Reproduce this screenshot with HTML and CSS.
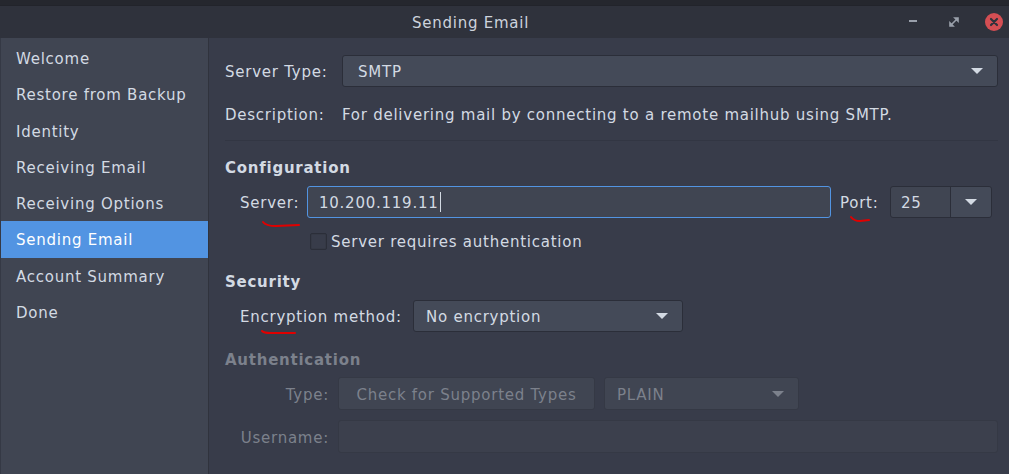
FILE: index.html
```html
<!DOCTYPE html>
<html>
<head>
<meta charset="utf-8">
<link rel="stylesheet" href="styles.css">
</head>
<body>
<div class="window">
  <div class="topstrip"></div>
  <div class="titlebar">
    <div class="title">Sending Email</div>
    <div class="controls">
      <span class="btn-min"></span>
      <svg class="btn-max" width="10" height="10" viewBox="0 0 10 10"><path d="M1 6 L1 9 L4 9 Z M6 1 L9 1 L9 4 Z M3 7 L7 3" fill="#9aa0ab" stroke="#9aa0ab" stroke-width="1.6"/></svg>
      <span class="btn-close"><svg width="18" height="18" viewBox="0 0 18 18"><circle cx="9" cy="9" r="9" fill="#d44e53"/><path d="M6 6 L12 12 M12 6 L6 12" stroke="#2f323c" stroke-width="2.2" stroke-linecap="round"/></svg></span>
    </div>
  </div>
  <div class="body">
    <ul class="sidebar">
      <li>Welcome</li>
      <li>Restore from Backup</li>
      <li>Identity</li>
      <li>Receiving Email</li>
      <li>Receiving Options</li>
      <li class="active">Sending Email</li>
      <li>Account Summary</li>
      <li>Done</li>
    </ul>
    <div class="main">
      <div class="row r-type">
        <span class="lbl">Server Type:</span>
        <div class="combo wide"><span>SMTP</span><span class="arrow"></span></div>
      </div>
      <div class="row r-desc">
        <span class="lbl">Description:</span>
        <span class="desc">For delivering mail by connecting to a remote mailhub using SMTP.</span>
      </div>
      <div class="sep"></div>
      <div class="heading">Configuration</div>
      <div class="row r-server">
        <span class="lbl ind">Server:</span>
        <div class="entry focus">10.200.119.11<span class="caret"></span></div>
        <span class="lbl port">Port:</span>
        <div class="spin"><span class="val">25</span><span class="spinbtn"><span class="arrow"></span></span></div>
      </div>
      <div class="row r-check">
        <span class="check"></span><span class="lbl">Server requires authentication</span>
      </div>
      <div class="heading h-sec">Security</div>
      <div class="row r-enc">
        <span class="lbl ind">Encryption method:</span>
        <div class="combo enc"><span>No encryption</span><span class="arrow"></span></div>
      </div>
      <div class="heading h-auth disabled">Authentication</div>
      <div class="row r-authtype disabled">
        <span class="lbl rcol">Type:</span>
        <div class="button">Check for Supported Types</div>
        <div class="combo plain"><span>PLAIN</span><span class="arrow"></span></div>
      </div>
      <div class="row r-user disabled">
        <span class="lbl rcol">Username:</span>
        <div class="entry dis"></div>
      </div>
    </div>
  </div>
  <svg class="marks" width="1009" height="474" viewBox="0 0 1009 474">
    <path d="M263 222 Q266 226 276 226 L299 225" fill="none" stroke="#e00000" stroke-width="2" stroke-linecap="round"/>
    <path d="M851 217 Q854 221 860 221 L869 220" fill="none" stroke="#e00000" stroke-width="2" stroke-linecap="round"/>
    <path d="M262 331 Q264 333 270 333 L295 333" fill="none" stroke="#e00000" stroke-width="2" stroke-linecap="round"/>
  </svg>
</div>
</body>
</html>
```

FILE: styles.css
```css
* { box-sizing: border-box; }
html, body { margin: 0; padding: 0; }
body {
  width: 1009px;
  height: 474px;
  overflow: hidden;
  background: #383c4a;
  font-family: "DejaVu Sans", sans-serif;
  font-size: 15px;
  letter-spacing: 0.75px;
  color: #d3dae3;
}
.window { position: relative; width: 1009px; height: 474px; display: flex; flex-direction: column; }
.topstrip { height: 6px; background: #25272e; border-bottom: 1px solid #22242b; }
.titlebar {
  height: 32px;
  background: #2f323c;
  display: flex;
  align-items: center;
  position: relative;
}
.title { flex: 1; text-align: center; padding-left: 32px; padding-top: 2px; color: #cdd3dc; font-size: 15px; }
.controls { display: flex; align-items: center; gap: 0; padding-right: 6px; }
.btn-min { width: 8px; height: 2px; background: #9aa0ab; margin-right: 32px; margin-top: -2px; }
.btn-max { margin-right: 26px; }
.btn-close { width: 18px; height: 18px; display: block; }
.btn-close svg { display: block; }

.body { flex: 1; display: flex; min-height: 0; }
.sidebar {
  list-style: none;
  margin: 0;
  padding: 2px 0 0 0;
  width: 209px;
  background: #404552;
  border-left: 1px solid #353945;
  border-right: 1px solid #30333d;
}
.sidebar li {
  height: 36.3px;
  line-height: 38.3px;
  padding-left: 15px;
  white-space: nowrap;
}
.sidebar li.active { background: #5294e2; color: #fff; }

.main { flex: 1; padding: 17px 11px 0 16px; }
.row { display: flex; align-items: center; }
.lbl { white-space: nowrap; padding-top: 2px; }
.ind { margin-left: 15px; }

.combo, .entry, .spin, .button {
  height: 32px;
  border-radius: 3px;
  display: flex;
  align-items: center;
  white-space: nowrap;
  padding-top: 2px;
}
.combo {
  background: #444a58;
  border: 1px solid #2b2e39;
  justify-content: space-between;
  padding-right: 14px;
  padding-left: 12px;
}
.arrow {
  width: 0; height: 0;
  border-left: 6px solid transparent;
  border-right: 6px solid transparent;
  border-top: 6px solid #d3dae3;
  margin-top: -2px;
}
.r-type .lbl { width: 117px; }
.combo.wide { flex: 1; padding-left: 15px; }

.r-desc { margin-top: 17px; height: 20px; }
.r-desc .lbl { width: 117px; }
.desc { white-space: nowrap; padding-top: 2px; }
.sep { height: 1px; background: #323643; margin: 16px 0 0 0; }

.heading { font-weight: bold; margin-top: 16px; height: 20px; line-height: 22px; }

.r-server { margin-top: 9px; }
.r-server .lbl.ind { width: 67px; }
.entry {
  background: #404552;
  border: 1px solid #2b2e39;
  padding-left: 11px;
}
.entry.focus { width: 524px; border-color: #5294e2; }
.caret { display: inline-block; width: 1px; height: 20px; background: #d3dae3; margin-left: 1px; margin-top: -2px; }
.port { margin-left: 9px; width: 50px; }
.spin {
  width: 102px;
  background: #404552;
  border: 1px solid #2b2e39;
  padding: 0;
}
.spin .val { flex: 1; padding-left: 10px; padding-top: 2px; }
.spinbtn {
  width: 41px; height: 100%;
  border-left: 1px solid #2b2e39;
  background: #444a58;
  display: flex; align-items: center; justify-content: center;
  border-radius: 0 3px 3px 0;
}
.spinbtn .arrow { margin-top: 0; }
.r-check { margin-top: 3px; height: 40px; padding-left: 85px; }
.check {
  width: 17px; height: 17px;
  border: 1px solid #2b2e39;
  background: #383c4a;
  border-radius: 2px;
  margin-right: 4px;
  box-shadow: inset 0 0 0 1px #353945;
}
.h-sec { margin-top: 10px; }
.r-enc { margin-top: 9px; }
.r-enc .lbl.ind { width: 173px; }
.combo.enc { width: 270px; }

.disabled { color: #7c818c; }
.h-auth { margin-top: 17px; }
.r-authtype { margin-top: 8px; }
.r-authtype .button, .r-authtype .combo { height: 33px; }
.rcol { width: 113px; text-align: right; padding-right: 9px; }
.button {
  background: #404552;
  border: 1px solid #353945;
  padding-left: 10px;
  padding-right: 10px;
  width: 257px;
  justify-content: center;
}
.combo.plain {
  width: 195px;
  margin-left: 9px;
  background: #404552;
  border-color: #353945;
}
.disabled .arrow { border-top-color: #7c818c; }
.r-user { margin-top: 10px; }
.entry.dis { flex: 1; border-color: #353945; background: #3c404d; height: 33px; }

.marks { position: absolute; left: 0; top: 0; pointer-events: none; }
```
